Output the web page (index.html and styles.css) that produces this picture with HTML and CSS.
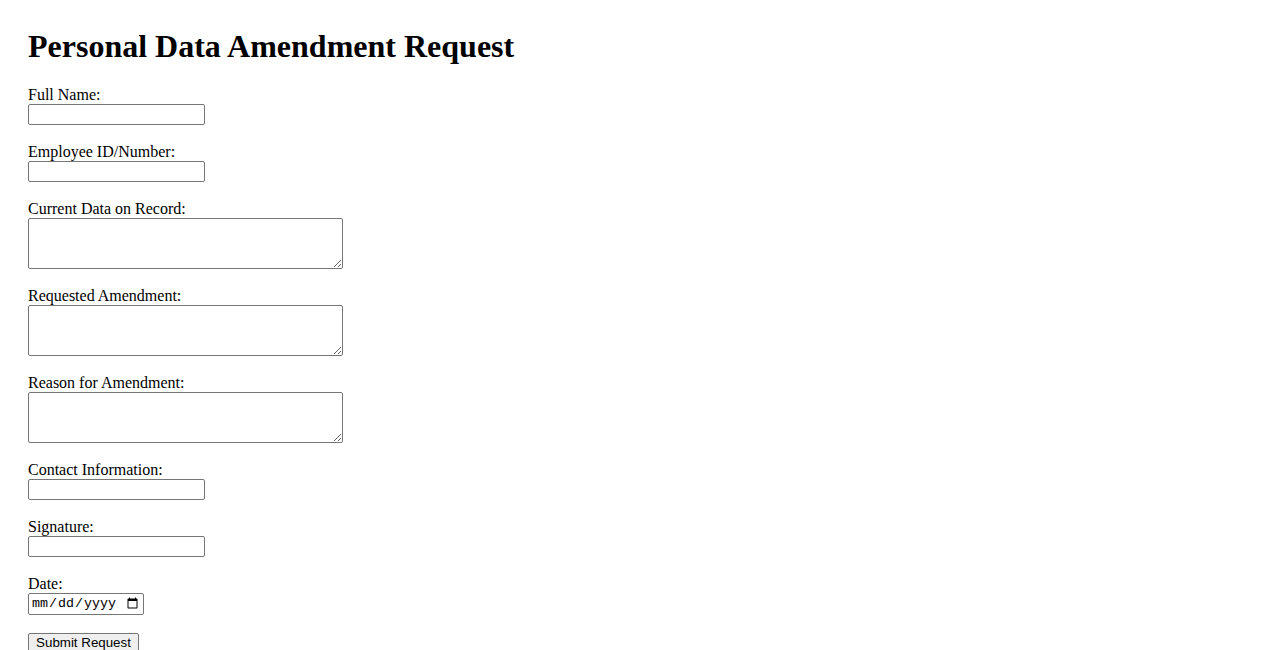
FILE: index.html
```html
<!DOCTYPE html>
<html>
<head>
<meta charset="utf-8">
<title>Personal Data Amendment Request</title>
<link rel="stylesheet" href="styles.css">
</head>
<body>
<h1 class="title">Personal Data Amendment Request</h1>
<form class="form">
  <div class="field">
    <label class="label" for="name">Full Name:</label>
    <input class="text-input" type="text" id="name">
  </div>
  <div class="field">
    <label class="label" for="emp">Employee ID/Number:</label>
    <input class="text-input" type="text" id="emp">
  </div>
  <div class="field">
    <label class="label" for="current">Current Data on Record:</label>
    <textarea class="area" id="current"></textarea>
  </div>
  <div class="field">
    <label class="label" for="requested">Requested Amendment:</label>
    <textarea class="area" id="requested"></textarea>
  </div>
  <div class="field">
    <label class="label" for="reason">Reason for Amendment:</label>
    <textarea class="area" id="reason"></textarea>
  </div>
  <div class="field">
    <label class="label" for="contact">Contact Information:</label>
    <input class="text-input" type="text" id="contact">
  </div>
  <div class="field">
    <label class="label" for="sig">Signature:</label>
    <input class="text-input" type="text" id="sig">
  </div>
  <div class="field">
    <label class="label" for="date">Date:</label>
    <input class="date-input" type="date" id="date">
  </div>
  <button class="submit" type="submit">Submit Request</button>
</form>
</body>
</html>
```
FILE: styles.css
```css
html {
  background: #fff;
}
body {
  margin: 8px;
  padding: 0 20px;
  font-family: "Liberation Serif", "Times New Roman", serif;
  font-size: 16px;
  color: #000;
}
.title {
  font-size: 32px;
  font-weight: bold;
  margin: 20px 0 21px;
  line-height: 37px;
}
.form {
  margin: 0;
}
.field {
  margin-bottom: 18px;
}
.label {
  display: block;
  line-height: 18px;
}
.text-input {
  display: block;
  box-sizing: border-box;
  width: 177px;
  height: 21px;
  margin: 0;
  padding: 1px 2px;
  border: 1px solid #767676;
  border-radius: 2px;
  font-family: "Liberation Sans", Arial, sans-serif;
  font-size: 13.33px;
}
.area {
  display: block;
  box-sizing: border-box;
  width: 315px;
  height: 51px;
  margin: 0;
  padding: 2px;
  border: 1px solid #767676;
  border-radius: 2px;
  font-family: "Liberation Mono", monospace;
  font-size: 13.33px;
}
.date-input {
  display: block;
  box-sizing: border-box;
  width: 116px;
  height: 22px;
  margin: 0;
  padding: 1px 2px;
  border: 1px solid #767676;
  border-radius: 2px;
  font-family: "Liberation Mono", monospace;
  font-size: 13.33px;
}
.submit {
  display: block;
  box-sizing: border-box;
  width: 111px;
  height: 22px;
  margin: 0;
  padding: 0 6px 2px;
  border: 1px solid #767676;
  border-radius: 2px;
  background: #efefef;
  font-family: "Liberation Sans", Arial, sans-serif;
  font-size: 13.33px;
  line-height: 18px;
  color: #000;
}
```
